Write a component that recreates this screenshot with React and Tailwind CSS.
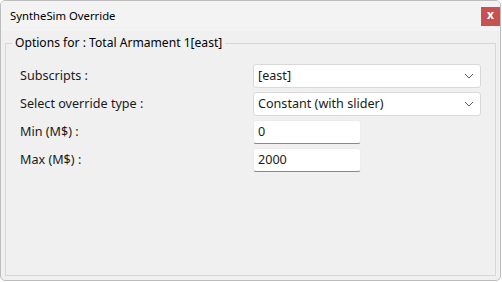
import React from 'react';

const rows = [
  { label: "Subscripts :", value: "[east]", kind: "select" },
  { label: "Select override type :", value: "Constant (with slider)", kind: "select" },
  { label: "Min (M$) :", value: "0", kind: "input" },
  { label: "Max (M$) :", value: "2000", kind: "input" },
];

const Chevron = () => (
  <svg width="10" height="6" viewBox="0 0 10 6" className="mr-[6px]">
    <path d="M1 1 L5 5 L9 1" fill="none" stroke="#5a5a5a" strokeWidth="1" />
  </svg>
);

function Field({ value, kind }) {
  if (kind === "select") {
    return (
      <div className="h-6 w-[228px] bg-white border border-[#d9d9d9] rounded-[3px] flex items-center justify-between pl-[4px]">
        <span>{value}</span>
        <Chevron />
      </div>
    );
  }
  return (
    <div className="h-6 w-[108px] bg-white border border-[#ececec] border-b-[#8a8a8a] rounded-[3px] flex items-center pl-[4px]">
      {value}
    </div>
  );
}

export default function App() {
  return (
    <div className="w-[502px] h-[282px] bg-white" style={{ fontFamily: '"Noto Sans", "Open Sans", sans-serif' }}>
      <div className="w-[501px] h-[281px] border border-[#bdbdbd] rounded-[5px] overflow-hidden flex flex-col bg-[#f0f0f0] text-[12.6px] text-[#1a1a1a]">
        <div className="h-[30px] bg-[#f3f3f3] flex items-center justify-between pl-[9px] pr-0 shrink-0">
          <span className="text-[11.3px] text-black">SyntheSim Override</span>
          <div className="w-[19px] h-[19px] bg-[#c75050] text-white flex items-center justify-center text-[12px] font-bold leading-none pb-[2px]">
            x
          </div>
        </div>
        <div className="flex-1 px-[4px] pt-[2px] pb-[4px] flex">
          <fieldset className="flex-1 border border-[#d7d7d7] pt-[11px]">
            <legend className="ml-[6px] px-[3px] text-[12.1px] leading-[20px] text-black">
              Options for : Total Armament 1[east]
            </legend>
            <div className="grid grid-cols-[233px_228px] gap-y-1 items-center pl-[14px]">
              {rows.map((r, i) => (
                <React.Fragment key={i}>
                  <div>{r.label}</div>
                  <Field value={r.value} kind={r.kind} />
                </React.Fragment>
              ))}
            </div>
          </fieldset>
        </div>
      </div>
    </div>
  );
}
